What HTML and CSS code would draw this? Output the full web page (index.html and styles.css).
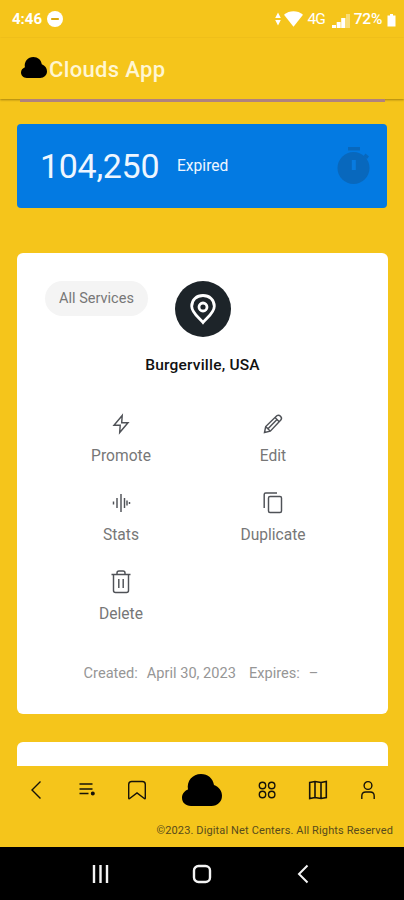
FILE: index.html
```html
<!DOCTYPE html>
<html lang="en">
<head>
<meta charset="utf-8">
<title>Clouds App</title>
<link rel="stylesheet" href="styles.css">
</head>
<body>
<svg class="defs" width="0" height="0" aria-hidden="true">
  <symbol id="cloud" viewBox="0 0 40 32">
    <path d="M9 32C3.500 32 0 28.500 0 23.800C0 19.800 2.500 17 6 15.500C4.500 7 10.500 0 19 0C26 0 31 4.500 32 11C37 13 40 17 40 21.800C40 27.800 35.500 32 29.500 32Z"/>
  </symbol>
</svg>
<header class="status">
  <span class="time">4:46</span>
  <svg class="dnd" width="16" height="16" viewBox="0 0 16 16"><circle cx="8" cy="8" r="8" fill="#fff"/><path d="M4.200 8h7.600" stroke="#dba90c" stroke-width="2"/></svg>
  <span class="grow"></span>
  <svg class="wifi" width="28" height="18" viewBox="0 0 28 18" fill="#fff"><path d="M3 2.500L5.800 8H.2ZM3 15.500L.2 10H5.800Z"/><path d="M9 4.800C14.500.2 22.500.2 28 4.800L18.500 16.800Z"/></svg>
  <span class="net">4G</span>
  <svg class="signal" width="18" height="16" viewBox="0 0 18 16" fill="#fff"><path d="M0 12h4v3H0zM4.700 9h4v6h-4zM9.200 5h4.200v10H9.200z"/><path opacity=".4" d="M14 1h4v14h-4z"/></svg>
  <span class="percent">72%</span>
  <svg class="battery" width="9" height="14" viewBox="0 0 9 14" fill="#fff"><path d="M3 1h3v1.500h2.500v11H.5v-11H3z"/></svg>
</header>
<div class="appbar">
  <svg width="26" height="21"><use href="#cloud"/></svg>
  <h1>Clouds App</h1>
</div>
<main>
  <div class="strip"></div>
  <section class="summary">
    <span class="total">104,250</span>
    <span class="state">Expired</span>
    <svg width="34" height="40" viewBox="0 0 34 40" fill="#0868bd"><path d="M11 1h12v3.500H11zM26.500 10l2-2.500 3.500 3-2 2.500z"/><circle cx="16.500" cy="22" r="16"/><path fill="#087be0" d="M14.800 14h4v10h-4z"/></svg>
  </section>
  <article class="card">
    <div class="top">
      <span class="chip">All Services</span>
      <span class="avatar">
        <svg width="26" height="31" viewBox="0 0 26 31" fill="none" stroke="#fff" stroke-width="2.800"><path d="M13 28.500C10 24.500 1.700 19 1.700 12.200C1.700 5.800 6.500 1.500 13 1.500S24.300 5.800 24.300 12.200C24.300 19 16 24.500 13 28.500Z"/><circle cx="13" cy="13" r="4"/></svg>
      </span>
    </div>
    <h2>Burgerville, USA</h2>
    <div class="actions">
      <div class="action">
        <svg viewBox="0 0 24 24"><path d="M13.200 3.500L5 13.200h6.200l-.5 7.300L19 10.800h-6.300z"/></svg>
        <span>Promote</span>
      </div>
      <div class="action">
        <svg viewBox="0 0 24 24"><path d="M3.500 20.500l1.200-6L15.800 3.800q1.800-1.500 3.700.4t.3 3.700L9.300 19.200zM4.700 14.500l4.600 4.700M14 5.500l4.500 4.500M16 7.500L7 16.700"/></svg>
        <span>Edit</span>
      </div>
      <div class="action">
        <svg viewBox="0 0 24 24"><path d="M4.500 10.500v3M8 7v10M12 3v18M15.500 7v10M18 9.500v5M20.500 11v2"/></svg>
        <span>Stats</span>
      </div>
      <div class="action">
        <svg viewBox="0 0 24 24"><rect x="7.500" y="5.500" width="13" height="16" rx="1.500"/><path d="M3.200 17V3.500q0-1.500 1.500-1.500H16"/></svg>
        <span>Duplicate</span>
      </div>
      <div class="action">
        <svg viewBox="0 0 24 24"><path d="M2.500 4.500h19M4.500 4.500v16q0 2 2 2h11q2 0 2-2v-16M8 4.500V3q0-2 2-2h4q2 0 2 2v1.500M9.800 9v9M14.200 9v9"/></svg>
        <span>Delete</span>
      </div>
    </div>
    <div class="dates"><span class="created">Created:</span><span class="date">April 30, 2023</span><span class="expires">Expires:</span><span>–</span></div>
  </article>
  <article class="card next"></article>
</main>
<footer>
  <nav class="tabs">
    <svg viewBox="0 0 24 24"><path d="M16.500 3.500L8 12l8.500 8.500"/></svg>
    <svg viewBox="0 0 24 24"><path d="M4.500 6h13M4.500 11h13M4.500 15.500h9"/><circle cx="17.800" cy="15.500" r="1.300" fill="#16130a"/></svg>
    <svg viewBox="0 0 24 24"><path d="M3.700 20V6.500q0-3 3-3h10.600q3 0 3 3V20q0 1.300-1.300.3L12 15l-7 5.300Q3.700 21.300 3.700 20z"/></svg>
    <svg class="home" viewBox="0 0 40 32"><use href="#cloud"/></svg>
    <svg viewBox="0 0 24 24"><circle cx="7.500" cy="7.500" r="3.200"/><circle cx="16.700" cy="7.500" r="3.200"/><circle cx="7.500" cy="16.500" r="3.200"/><circle cx="16.700" cy="16.500" r="3.200"/></svg>
    <svg viewBox="0 0 24 24"><path d="M3.700 4.500L9 3.500l6 1 5.300-1v16l-5.300 1-6-1-5.300 1zM9 3.500v16M15 4.500v16" stroke-width="1.600"/></svg>
    <svg viewBox="0 0 24 24"><circle cx="12" cy="7.500" r="3.900"/><path d="M5.800 21v-3q0-4 4-4h4.400q4 0 4 4v3"/></svg>
  </nav>
  <p>©2023. Digital Net Centers. All Rights Reserved</p>
</footer>
<nav class="system">
  <svg viewBox="0 0 20 20"><path d="M3 1v18M9.500 1v18M16 1v18"/></svg>
  <svg viewBox="0 0 20 20"><rect x="2" y="2" width="16" height="16" rx="4.500"/></svg>
  <svg viewBox="0 0 20 20"><path d="M14.500 1.500L6 10l8.500 8.500" stroke-width="2"/></svg>
</nav>
</body>
</html>
```
FILE: styles.css
```css
* { box-sizing: border-box; }
body {
  margin: 0;
  width: 404px;
  height: 900px;
  display: flex;
  flex-direction: column;
  overflow: hidden;
  background: #f5c51b;
  font-family: Roboto, sans-serif;
}
svg { display: block; flex: none; }
.defs { position: absolute; }
h1, h2, p { margin: 0; }
.status {
  height: 38px;
  display: flex;
  align-items: center;
  padding: 0 8px 0 12px;
  color: #fff;
  font-size: 15.500px;
  font-weight: 500;
}
.time { font-size: 15px; font-weight: 700; }
.dnd { margin-left: 5px; }
.grow { flex: 1; }
.net { margin-left: 5px; font-weight: 400; letter-spacing: -1px; }
.signal { margin: 3px 4px 0 7px; }
.percent { letter-spacing: -.3px; }
.battery { margin: 1px 0 0 5px; }
.appbar {
  height: 61px;
  display: flex;
  align-items: center;
  padding: 0 21px;
  z-index: 1;
  background: #f5c51b;
  box-shadow: 0 1px 2px rgba(70, 50, 0, .45);
}
.appbar svg { margin-bottom: 2px; }
h1 {
  margin: 2px 0 0 2px;
  color: #fff6d2;
  font-size: 22px;
  font-weight: 500;
  line-height: 26px;
  letter-spacing: .35px;
}
main {
  flex: 1;
  min-height: 0;
  padding: 0 16px 0 17px;
  overflow: hidden;
}
.strip {
  position: relative;
  z-index: 2;
  width: 365px;
  height: 3px;
  margin-left: 3px;
  background: #b0827d;
}
.summary {
  width: 370px;
  height: 84px;
  margin-top: 22px;
  padding: 0 16px 0 23px;
  display: flex;
  align-items: center;
  border-radius: 4px;
  background: #037ae2;
  color: #eef6ff;
}
.total { font-size: 34px; letter-spacing: -.3px; width: 137px; }
.state { font-size: 15.600px; flex: 1; }
.card {
  height: 461px;
  margin-top: 45px;
  padding: 28px;
  border-radius: 6px;
  background: #fff;
}
.top { display: grid; grid-template-columns: 103px 56px; column-gap: 27px; }
.chip {
  height: 35px;
  border-radius: 18px;
  background: #f4f4f4;
  color: #777;
  font-size: 14.500px;
  line-height: 35px;
  text-align: center;
}
.avatar {
  width: 56px;
  height: 56px;
  display: grid;
  place-items: center;
  border-radius: 50%;
  background: #1d2429;
}
h2 {
  margin-top: 18px;
  color: #111;
  font-size: 15.500px;
  font-weight: 500;
  line-height: 20px;
  letter-spacing: .2px;
  text-align: center;
}
.actions {
  width: 304px;
  margin-top: 37px;
  display: grid;
  grid-template-columns: 1fr 1fr;
  grid-auto-rows: 79px;
}
.action {
  display: flex;
  flex-direction: column;
  align-items: center;
  color: #777;
  font-size: 15.600px;
  line-height: 20px;
}
.action svg {
  width: 24px;
  height: 24px;
  margin-bottom: 10px;
  fill: none;
  stroke: #4f5257;
  stroke-width: 1.450;
}
.dates {
  display: flex;
  justify-content: center;
  margin-top: 14px;
  padding-right: 3px;
  color: #969696;
  font-size: 14.600px;
  line-height: 20px;
}
.created { margin-right: 9px; }
.date { margin-right: 13px; }
.expires { margin-right: 9px; }
.next { height: 60px; margin-top: 28px; }
footer { height: 81px; background: #f5c51b; }
.tabs {
  height: 47px;
  display: flex;
  align-items: center;
  gap: 26.500px;
  padding-left: 24px;
}
.tabs svg {
  width: 24px;
  height: 24px;
  fill: none;
  stroke: #16130a;
  stroke-width: 1.400;
}
.tabs .home { width: 40px; height: 32px; margin: 0 6.500px; fill: #000; stroke: none; }
footer p {
  padding: 10px 11px 0;
  color: #584b1c;
  font-size: 11px;
  line-height: 16px;
  letter-spacing: .13px;
  text-align: right;
}
.system {
  height: 53px;
  display: grid;
  grid-template-columns: repeat(3, 20px);
  justify-content: center;
  column-gap: 81px;
  align-items: center;
  background: #000;
}
.system svg { width: 20px; height: 20px; fill: none; stroke: #f4f4f4; stroke-width: 2.400; }
```
